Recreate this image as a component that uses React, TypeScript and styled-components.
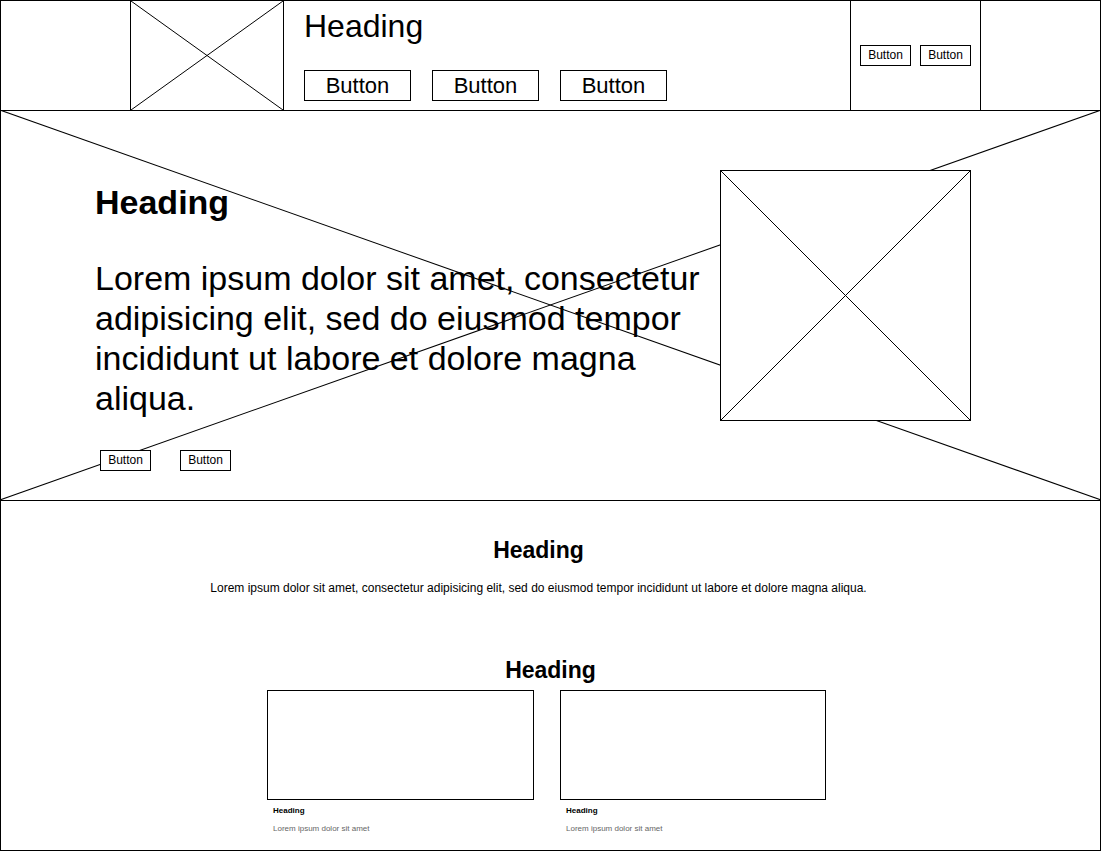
import React from "react";
import styled, { createGlobalStyle } from "styled-components";

const GlobalStyle = createGlobalStyle`
  html, body {
    margin: 0;
    padding: 0;
    background: #fff;
  }
  body {
    font-family: "Liberation Sans", Arial, Helvetica, sans-serif;
    color: #000;
  }
  * {
    box-sizing: border-box;
  }
`;

const Page = styled.div`
  width: 1101px;
  height: 851px;
  border: 1px solid #000;
  display: flex;
  flex-direction: column;
  overflow: hidden;
`;

/* ---------- header ---------- */

const Header = styled.header`
  display: flex;
  height: 110px;
  flex-shrink: 0;
  border-bottom: 1px solid #000;
`;

const Spacer = styled.div<{ $width?: number }>`
  width: ${(p) => (p.$width ? `${p.$width}px` : "auto")};
  flex: ${(p) => (p.$width ? "0 0 auto" : "1")};
`;

const LogoCell = styled.div`
  width: 154px;
  border-left: 1px solid #000;
  border-right: 1px solid #000;
`;

const TitleCell = styled.div`
  width: 566px;
  padding: 7px 0 0 20px;
`;

const HeaderTitle = styled.h1`
  margin: 0;
  font-size: 32px;
  font-weight: 400;
  line-height: 36px;
`;

const NavRow = styled.nav`
  display: flex;
  gap: 21px;
  margin-top: 26px;
`;

const ActionsCell = styled.div`
  width: 131px;
  display: flex;
  align-items: flex-start;
  gap: 9px;
  padding: 44px 0 0 9px;
  border-left: 1px solid #000;
  border-right: 1px solid #000;
`;

const Button = styled.button<{ $size: "lg" | "sm" }>`
  font-family: inherit;
  color: #000;
  background: #fff;
  border: 1px solid #000;
  border-radius: 0;
  padding: 0 0 ${(p) => (p.$size === "lg" ? 0 : 1)}px;
  width: ${(p) => (p.$size === "lg" ? 107 : 51)}px;
  height: ${(p) => (p.$size === "lg" ? 31 : 21)}px;
  font-size: ${(p) => (p.$size === "lg" ? 22 : 12)}px;
  line-height: 1;
`;

/* ---------- placeholder cross ---------- */

const CrossSvg = styled.svg`
  display: block;
  width: 100%;
  height: 100%;
`;

const Cross: React.FC = () => (
  <CrossSvg viewBox="0 0 100 100" preserveAspectRatio="none">
    <line x1="0" y1="0" x2="100" y2="100" stroke="#000" strokeWidth="1" vectorEffect="non-scaling-stroke" />
    <line x1="0" y1="100" x2="100" y2="0" stroke="#000" strokeWidth="1" vectorEffect="non-scaling-stroke" />
  </CrossSvg>
);

/* ---------- hero ---------- */

const Hero = styled.section`
  position: relative;
  height: 390px;
  flex-shrink: 0;
  border-bottom: 1px solid #000;
`;

const HeroBackdrop = styled.div`
  position: absolute;
  top: -1px;
  left: -1px;
  width: calc(100% + 2px);
  height: calc(100% + 1px);
`;

const HeroInner = styled.div`
  position: relative;
  display: flex;
  align-items: flex-start;
  padding-left: 94px;
`;

const HeroText = styled.div`
  width: 615px;
  padding-top: 71px;
`;

const HeroTitle = styled.h2`
  margin: 0;
  font-size: 34px;
  font-weight: 700;
  line-height: 40px;
`;

const HeroCopy = styled.p`
  margin: 36px 0 0;
  font-size: 34px;
  line-height: 40px;
`;

const HeroActions = styled.div`
  display: flex;
  gap: 29px;
  margin-top: 32px;
  padding-left: 5px;
`;

const HeroImage = styled.div`
  width: 251px;
  height: 251px;
  margin: 59px 0 0 10px;
  border: 1px solid #000;
  background: #fff;
`;

/* ---------- features ---------- */

const Features = styled.section`
  flex: 1;
  display: flex;
  flex-direction: column;
  padding-top: 36px;
`;

const Intro = styled.div`
  padding-right: 24px;
  text-align: center;
`;

const SectionTitle = styled.h3<{ $gap?: number }>`
  margin: ${(p) => p.$gap ?? 0}px 0 0;
  font-size: 23px;
  font-weight: 700;
  line-height: 27px;
  text-align: center;
`;

const IntroCopy = styled.p`
  margin: 17px 0 0;
  font-size: 12px;
  line-height: 14px;
`;

const CardRow = styled.div`
  display: grid;
  grid-template-columns: 267px 266px;
  gap: 26px;
  margin: 6px 0 0 266px;
`;

const Card = styled.article``;

const CardFrame = styled.div`
  height: 110px;
  border: 1px solid #000;
`;

const CardTitle = styled.h4`
  margin: 6px 0 0 6px;
  font-size: 8px;
  font-weight: 700;
  line-height: 10px;
`;

const CardText = styled.p`
  margin: 8px 0 0 6px;
  font-size: 8px;
  line-height: 10px;
  color: #666;
`;

const App: React.FC = () => {
  return (
    <>
      <GlobalStyle />
      <Page>
        <Header>
          <Spacer $width={129} />
          <LogoCell>
            <Cross />
          </LogoCell>
          <TitleCell>
            <HeaderTitle>Heading</HeaderTitle>
            <NavRow>
              <Button $size="lg">Button</Button>
              <Button $size="lg">Button</Button>
              <Button $size="lg">Button</Button>
            </NavRow>
          </TitleCell>
          <ActionsCell>
            <Button $size="sm">Button</Button>
            <Button $size="sm">Button</Button>
          </ActionsCell>
          <Spacer />
        </Header>

        <Hero>
          <HeroBackdrop>
            <Cross />
          </HeroBackdrop>
          <HeroInner>
            <HeroText>
              <HeroTitle>Heading</HeroTitle>
              <HeroCopy>
                Lorem ipsum dolor sit amet, consectetur adipisicing elit, sed do eiusmod tempor incididunt ut labore
                et dolore magna aliqua.
              </HeroCopy>
              <HeroActions>
                <Button $size="sm">Button</Button>
                <Button $size="sm">Button</Button>
              </HeroActions>
            </HeroText>
            <HeroImage>
              <Cross />
            </HeroImage>
          </HeroInner>
        </Hero>

        <Features>
          <Intro>
            <SectionTitle>Heading</SectionTitle>
            <IntroCopy>
              Lorem ipsum dolor sit amet, consectetur adipisicing elit, sed do eiusmod tempor incididunt ut labore et
              dolore magna aliqua.
            </IntroCopy>
          </Intro>
          <SectionTitle $gap={62}>Heading</SectionTitle>
          <CardRow>
            <Card>
              <CardFrame />
              <CardTitle>Heading</CardTitle>
              <CardText>Lorem ipsum dolor sit amet</CardText>
            </Card>
            <Card>
              <CardFrame />
              <CardTitle>Heading</CardTitle>
              <CardText>Lorem ipsum dolor sit amet</CardText>
            </Card>
          </CardRow>
        </Features>
      </Page>
    </>
  );
};

export default App;
